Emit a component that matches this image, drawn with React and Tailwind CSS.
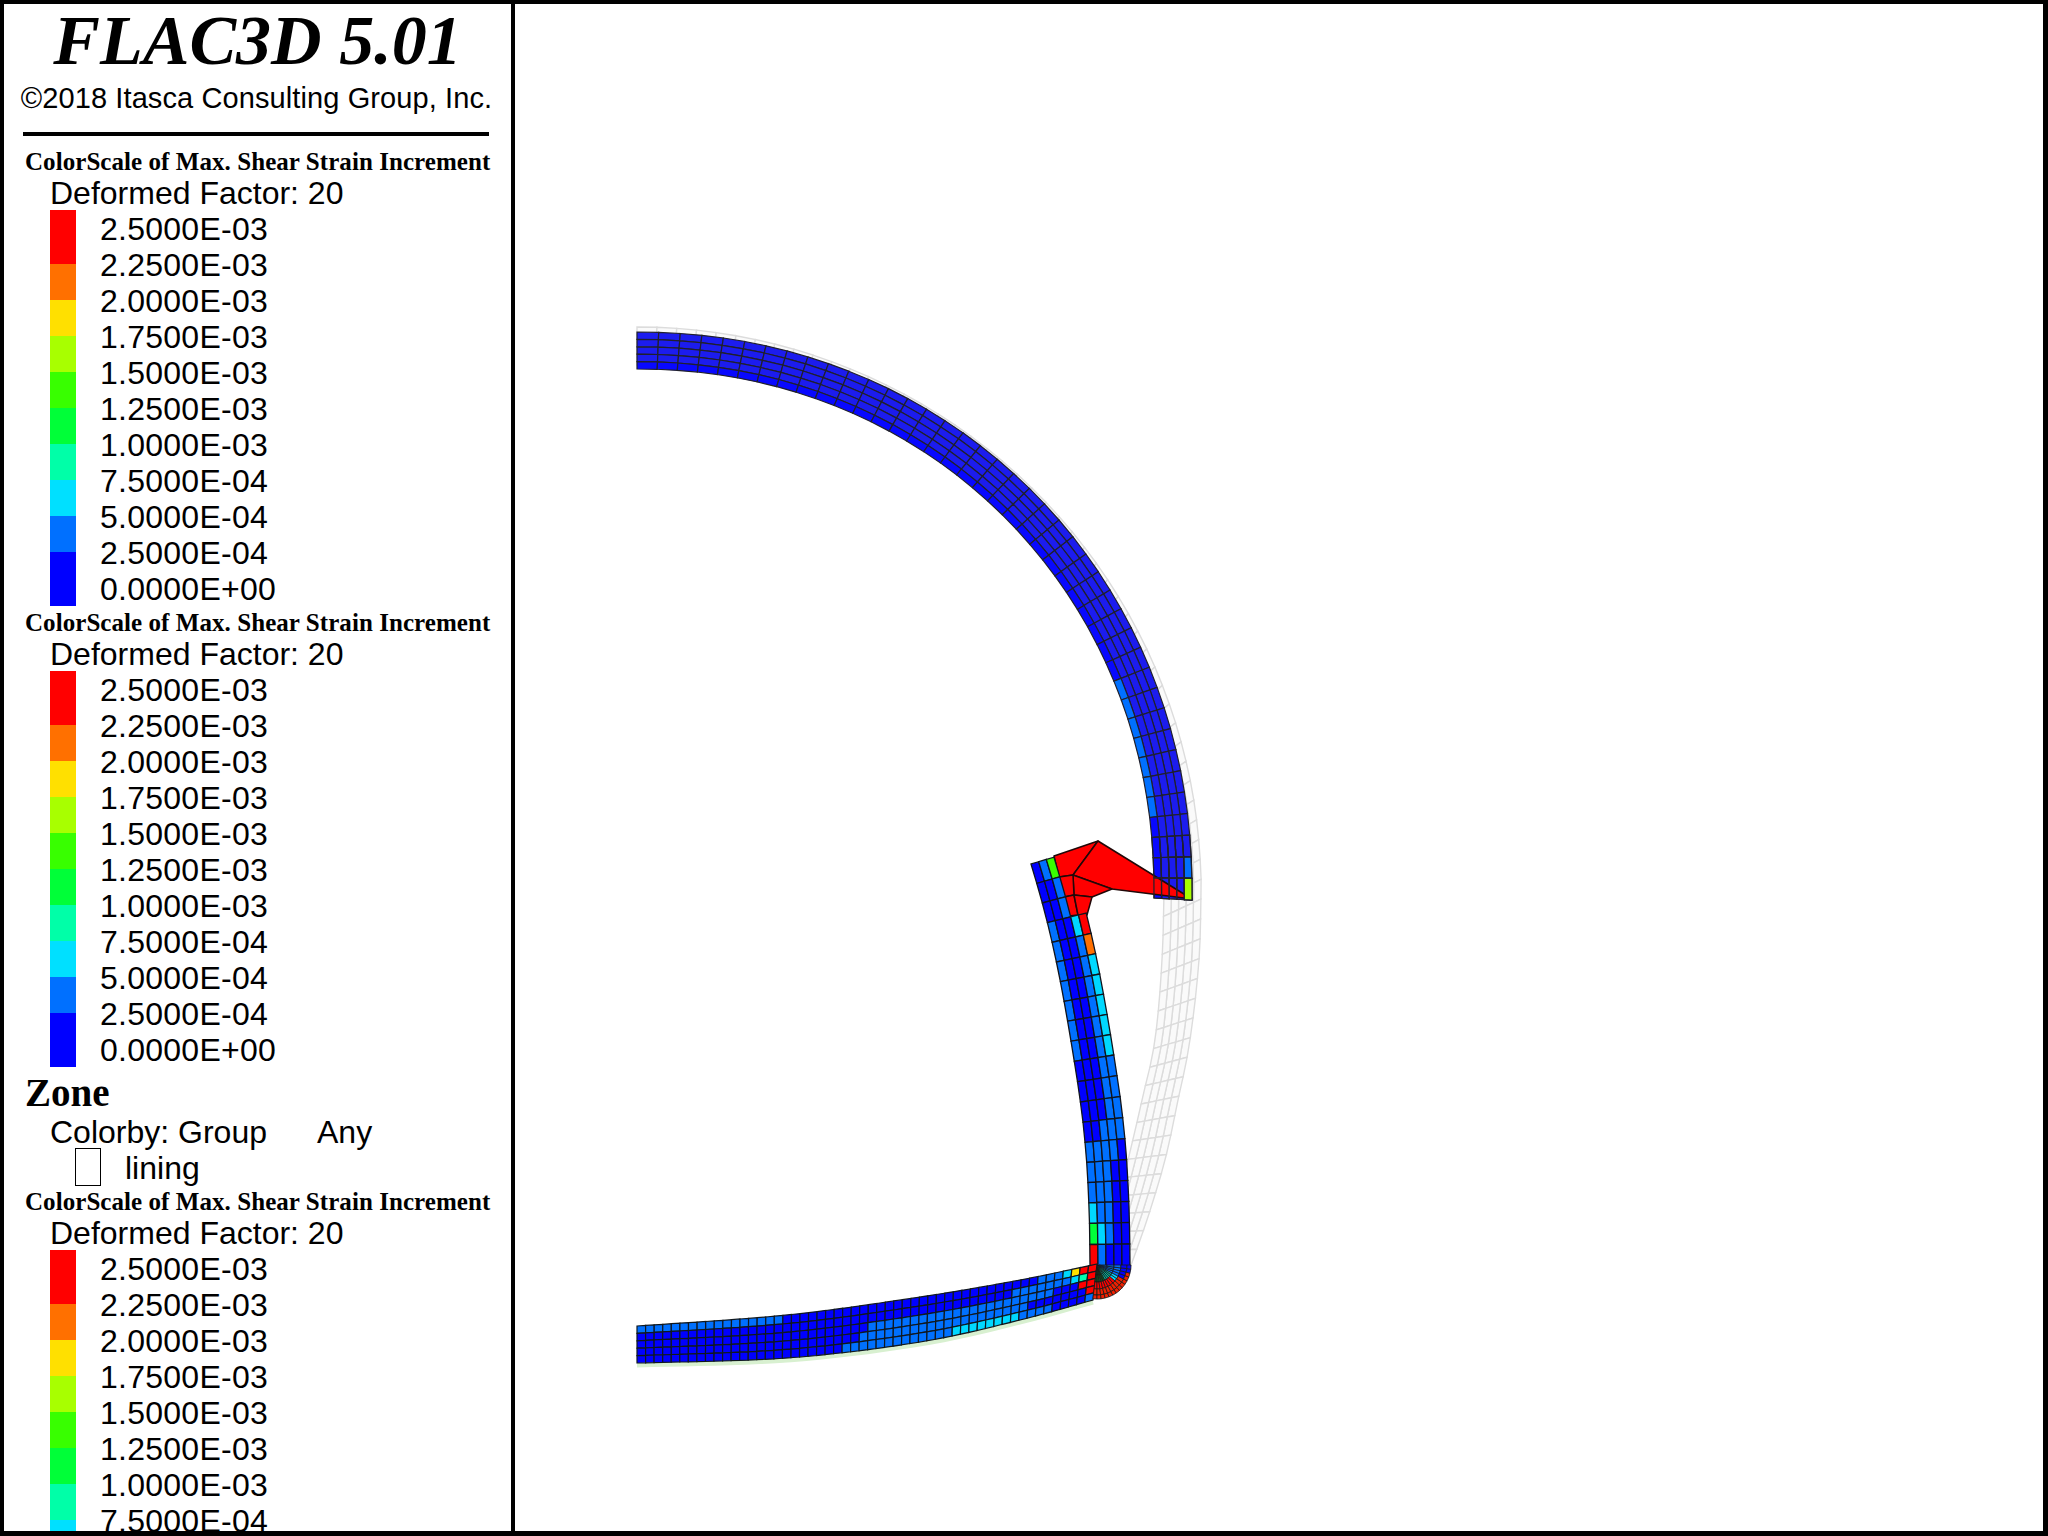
const SCALE = [
  { label: '2.5000E-03', color: 'bg-[#ff0000]', height: 'h-[54px]' },
  { label: '2.2500E-03', color: 'bg-[#ff7000]', height: 'h-9' },
  { label: '2.0000E-03', color: 'bg-[#ffe000]', height: 'h-9' },
  { label: '1.7500E-03', color: 'bg-[#a8ff00]', height: 'h-9' },
  { label: '1.5000E-03', color: 'bg-[#38ff00]', height: 'h-9' },
  { label: '1.2500E-03', color: 'bg-[#00ff38]', height: 'h-9' },
  { label: '1.0000E-03', color: 'bg-[#00ffa8]', height: 'h-9' },
  { label: '7.5000E-04', color: 'bg-[#00e0ff]', height: 'h-9' },
  { label: '5.0000E-04', color: 'bg-[#0070ff]', height: 'h-9' },
  { label: '2.5000E-04', color: 'bg-[#0000ff]', height: 'h-[54px]' },
  { label: '0.0000E+00' },
]

const C = {
  a: '#0000ff',
  b: '#0070ff',
  c: '#00d8ff',
  t: '#00ffb0',
  g: '#00ff38',
  l: '#38ff00',
  y: '#ffe000',
  o: '#ff7000',
  r: '#ff0000',
}

// the quarter arch is close to a slightly squared circle round (637, y)
function quarter(cy, a, b, n = 2.05, steps = 60) {
  const out = []
  for (let i = 0; i <= steps; i++) {
    const th = ((i / steps) * Math.PI) / 2
    out.push([637 + a * Math.pow(Math.sin(th), 2 / n), cy - b * Math.pow(Math.cos(th), 2 / n)])
  }
  return out
}

// geometry, all in page pixels
const GHOST_OUT = [...quarter(890, 564, 563, 2), [1199, 960], [1190, 1040], [1178, 1100], [1165, 1160], [1147, 1220], [1130, 1268]]
const GHOST_IN = [...quarter(890, 527, 525, 2), [1162, 960], [1155, 1040], [1142, 1100], [1128, 1160], [1112, 1220], [1095, 1268]]
const ARC_OUT = [...quarter(889, 555, 557), [1192, 900]]
const ARC_IN = [...quarter(889, 517, 520), [1154, 898]]
const WALL_LEFT = [[1031, 864], [1037, 883], [1043, 903], [1048, 923], [1052, 942], [1057, 962], [1061, 982], [1064, 1001], [1068, 1021], [1071, 1041], [1074, 1061], [1078, 1082], [1081, 1102], [1083, 1122], [1086, 1143], [1087, 1162], [1088, 1182], [1089, 1203], [1090, 1223], [1090, 1243], [1090, 1266]]
const WALL_ROWS = ['abl', 'aab', 'aab', 'baacr', 'baabo', 'baabc', 'baabc', 'baabc', 'baabc', 'baabc', 'aaabb', 'aaabb', 'aaabb', 'aabbb', 'bbbba', 'bbbaa', 'bbbaa', 'cbbaa', 'gcbaa', 'rbaaa']
const FLOOR_TOP = [[637, 1326], [787, 1315], [920, 1297], [1020, 1280], [1097, 1264]]
const FLOOR_BOTTOM = [[637, 1363], [787, 1358], [920, 1342], [1020, 1320], [1093, 1300]]
const FLOOR_RUNS = [
  [[17, 'b'], [47, 'a'], [50, 'b'], [51, 'c'], [52, 'y'], [54, 'r']],
  [[44, 'a'], [51, 'b'], [52, 'c'], [53, 't'], [54, 'r']],
  [[27, 'a'], [49, 'b'], [52, 'a'], [54, 'r']],
  [[26, 'a'], [46, 'b'], [53, 'a'], [54, 'r']],
  [[24, 'a'], [37, 'b'], [45, 'c'], [49, 'b'], [53, 'a'], [54, 'b']],
]
const RED_POLYS = [
  [[1054, 856], [1098, 841], [1073, 875], [1059, 877]],
  [[1098, 841], [1192, 899], [1112, 889], [1073, 875]],
  [[1073, 875], [1112, 889], [1092, 897], [1074, 895]],
  [[1059, 877], [1073, 875], [1074, 895], [1064, 897]],
  [[1064, 897], [1074, 895], [1078, 915], [1069, 916]],
  [[1074, 895], [1092, 897], [1087, 915], [1078, 915]],
]
const ARC_COLS = 41

function lerp(p, q, t) {
  return [p[0] + (q[0] - p[0]) * t, p[1] + (q[1] - p[1]) * t]
}

function smooth(pts) {
  const out = []
  for (let i = 0; i < pts.length - 1; i++) {
    const p0 = pts[Math.max(i - 1, 0)]
    const p1 = pts[i]
    const p2 = pts[i + 1]
    const p3 = pts[Math.min(i + 2, pts.length - 1)]
    for (let s = 0; s < 12; s++) {
      const t = s / 12
      const f = (k) =>
        0.5 * (2 * p1[k] + (p2[k] - p0[k]) * t + (2 * p0[k] - 5 * p1[k] + 4 * p2[k] - p3[k]) * t * t + (3 * p1[k] - p0[k] - 3 * p2[k] + p3[k]) * t * t * t)
      out.push([f(0), f(1)])
    }
  }
  out.push(pts[pts.length - 1])
  return out
}

function resample(pts, n) {
  const lens = [0]
  for (let i = 1; i < pts.length; i++) {
    lens.push(lens[i - 1] + Math.hypot(pts[i][0] - pts[i - 1][0], pts[i][1] - pts[i - 1][1]))
  }
  const total = lens[lens.length - 1]
  const out = []
  let k = 0
  for (let i = 0; i <= n; i++) {
    const d = (total * i) / n
    while (k < pts.length - 2 && lens[k + 1] < d) k++
    const t = (d - lens[k]) / (lens[k + 1] - lens[k] || 1)
    out.push(lerp(pts[k], pts[k + 1], Math.min(t, 1)))
  }
  return out
}

// grid[i][j]: i along the band, j across it
function band(outer, inner, cols, rows) {
  const a = resample(smooth(outer), cols)
  const b = resample(smooth(inner), cols)
  return a.map((p, i) => Array.from({ length: rows + 1 }, (_, j) => lerp(p, b[i], j / rows)))
}

function cell(grid, i, j) {
  return [grid[i][j], grid[i + 1][j], grid[i + 1][j + 1], grid[i][j + 1]]
}

function toPoints(poly) {
  return poly.map((p) => `${p[0].toFixed(1)},${p[1].toFixed(1)}`).join(' ')
}

function wallGrid() {
  // read-off points wobble by a pixel, average them out
  let left = WALL_LEFT
  for (let pass = 0; pass < 4; pass++) {
    left = left.map((p, i) =>
      i === 0 || i === left.length - 1 ? p : [(left[i - 1][0] + 2 * p[0] + left[i + 1][0]) / 4, (left[i - 1][1] + 2 * p[1] + left[i + 1][1]) / 4]
    )
  }
  return left.map((p, i) => {
    const p0 = left[Math.max(i - 1, 0)]
    const p1 = left[Math.min(i + 1, left.length - 1)]
    const dx = p1[0] - p0[0]
    const dy = p1[1] - p0[1]
    const len = Math.hypot(dx, dy)
    const right = [p[0] + (40 * dy) / len, p[1] - (40 * dx) / len]
    return Array.from({ length: 6 }, (_, j) => lerp(p, right, j / 5))
  })
}

function floorColor(i, j) {
  const run = FLOOR_RUNS[j].find((r) => i < r[0])
  return C[run ? run[1] : 'a']
}

function fanColor(k, r) {
  if (r <= 1) return k < 5 ? '#0c5a20' : k < 10 ? '#00b8a0' : C.b
  if (r === 2) return k < 8 ? C.r : k < 10 ? C.c : C.b
  if (r === 3) return k < 10 ? '#f02000' : C.a
  return k < 12 ? '#f02000' : C.a
}

function Mesh() {
  const ghost = band(GHOST_OUT, GHOST_IN, 64, 5)
  const arc = band(ARC_OUT, ARC_IN, ARC_COLS, 5)
  const wall = wallGrid()
  const floor = band(FLOOR_TOP, FLOOR_BOTTOM, 54, 5)

  const arcColor = (i, j) => {
    if (i === ARC_COLS - 1 && j === 0) return '#a8ff00'
    if (i === ARC_COLS - 2 && j === 0) return C.b
    if (j === 4) return i >= ARC_COLS - 11 && i < ARC_COLS - 4 ? C.b : '#0808ff'
    return '#1c1cee'
  }

  const center = [1097, 1265]
  const radii = [2, 10, 17, 24, 30, 34]
  const fanAt = (k, r) => {
    const angle = ((97 - (97 * k) / 14) * Math.PI) / 180
    return [center[0] + radii[r] * Math.cos(angle), center[1] + radii[r] * Math.sin(angle)]
  }

  return (
    <svg className="block w-full h-full" viewBox="515 4 1528 1527">
      {ghost.slice(0, -1).map((col, i) =>
        col.slice(0, -1).map((_, j) => (
          <polygon key={`g${i}-${j}`} points={toPoints(cell(ghost, i, j))} fill="#fafafa" stroke="#dcdcdc" strokeWidth="1.4" />
        ))
      )}

      <polyline points={toPoints(resample(smooth(FLOOR_BOTTOM), 30).map((p) => [p[0], p[1] + 2]))} fill="none" stroke="#d8f0d0" strokeWidth="5" />

      {arc.slice(0, -1).map((col, i) =>
        col.slice(0, -1).map((_, j) => (
          <polygon key={`a${i}-${j}`} points={toPoints(cell(arc, i, j))} fill={arcColor(i, j)} stroke="#20202c" strokeWidth="1.2" />
        ))
      )}

      {RED_POLYS.map((poly, i) => (
        <polygon key={`r${i}`} points={toPoints(poly)} fill={C.r} stroke="#200808" strokeWidth="1.5" strokeLinejoin="round" />
      ))}

      {[1, 2, 3].map((d) =>
        [0, 1, 2, 3, 4].map((j) => (
          <polygon key={`o${d}-${j}`} points={toPoints(cell(arc, ARC_COLS - d, j))} fill="none" stroke="#20202c" strokeWidth="1.2" />
        ))
      )}
      <polygon points={toPoints(cell(arc, ARC_COLS - 1, 0))} fill="#a8ff00" stroke="#20202c" strokeWidth="1.2" />

      {WALL_ROWS.map((row, i) =>
        row.split('').map((c, j) => (
          <polygon key={`w${i}-${j}`} points={toPoints(cell(wall, i, j))} fill={C[c]} stroke="#10141c" strokeWidth="1.3" />
        ))
      )}

      {floor.slice(0, -1).map((col, i) =>
        col.slice(0, -1).map((_, j) => (
          <polygon key={`f${i}-${j}`} points={toPoints(cell(floor, i, j))} fill={floorColor(i, j)} stroke="#10181e" strokeWidth="1.2" />
        ))
      )}

      {Array.from({ length: 14 }, (_, k) =>
        [0, 1, 2, 3, 4].map((r) => (
          <polygon
            key={`c${k}-${r}`}
            points={toPoints([fanAt(k, r), fanAt(k + 1, r), fanAt(k + 1, r + 1), fanAt(k, r + 1)])}
            fill={fanColor(k, r)}
            stroke="#181818"
            strokeWidth="0.8"
          />
        ))
      )}
    </svg>
  )
}

function ColorScale() {
  return (
    <section className="h-[461px] shrink-0">
      <h2 className="h-[26px] pl-[21px] font-['Liberation_Serif',serif] text-[25px] leading-[26px] tracking-[0.06px] font-bold whitespace-nowrap">
        ColorScale of Max. Shear Strain Increment
      </h2>
      <p className="h-9 -mb-px pl-[46px] text-[32px] leading-9 whitespace-nowrap">Deformed Factor: 20</p>
      <div className="flex pl-[46px]">
        <div className="w-[26px] shrink-0">
          {SCALE.filter((s) => s.color).map((s) => (
            <div key={s.label} className={`${s.height} ${s.color}`} />
          ))}
        </div>
        <ul className="pt-px pl-6">
          {SCALE.map((s) => (
            <li key={s.label} className="h-9 text-[32px] leading-9 tracking-[0.25px] whitespace-nowrap">
              {s.label}
            </li>
          ))}
        </ul>
      </div>
    </section>
  )
}

export default function App() {
  return (
    <div className="flex w-[2048px] h-[1536px] overflow-hidden bg-white text-black border-t-4 border-l-4 border-r-[5px] border-b-[5px] border-black font-['Liberation_Sans',sans-serif]">
      <aside className="w-[511px] shrink-0 h-full overflow-hidden border-r-4 border-black">
        <h1 className="h-[72px] pt-px text-center font-['Liberation_Serif',serif] text-[70px] leading-[72px] font-bold italic whitespace-nowrap">
          FLAC3D 5.01
        </h1>
        <p className="h-[44px] pr-0.5 text-center text-[29px] leading-[44px] tracking-[0.1px] whitespace-nowrap">©2018 Itasca Consulting Group, Inc.</p>
        <div className="h-1 mt-3 mb-[13px] ml-[19px] w-[466px] bg-black" />
        <ColorScale />
        <ColorScale />
        <div className="h-[118px]">
          <h2 className="h-[43px] pl-[21px] font-['Liberation_Serif',serif] text-[39px] leading-[43px] font-bold">Zone</h2>
          <div className="flex h-9 pl-[46px] text-[32px] leading-9 whitespace-nowrap">
            <span className="w-[267px]">Colorby: Group</span>
            <span>Any</span>
          </div>
          <div className="flex h-9 pl-[71px] text-[32px] leading-9 whitespace-nowrap">
            <span className="-mt-0.5 w-[26px] h-[38px] border border-black" />
            <span className="ml-6">lining</span>
          </div>
        </div>
        <ColorScale />
      </aside>
      <main className="flex-1 min-w-0 h-full">
        <Mesh />
      </main>
    </div>
  )
}
